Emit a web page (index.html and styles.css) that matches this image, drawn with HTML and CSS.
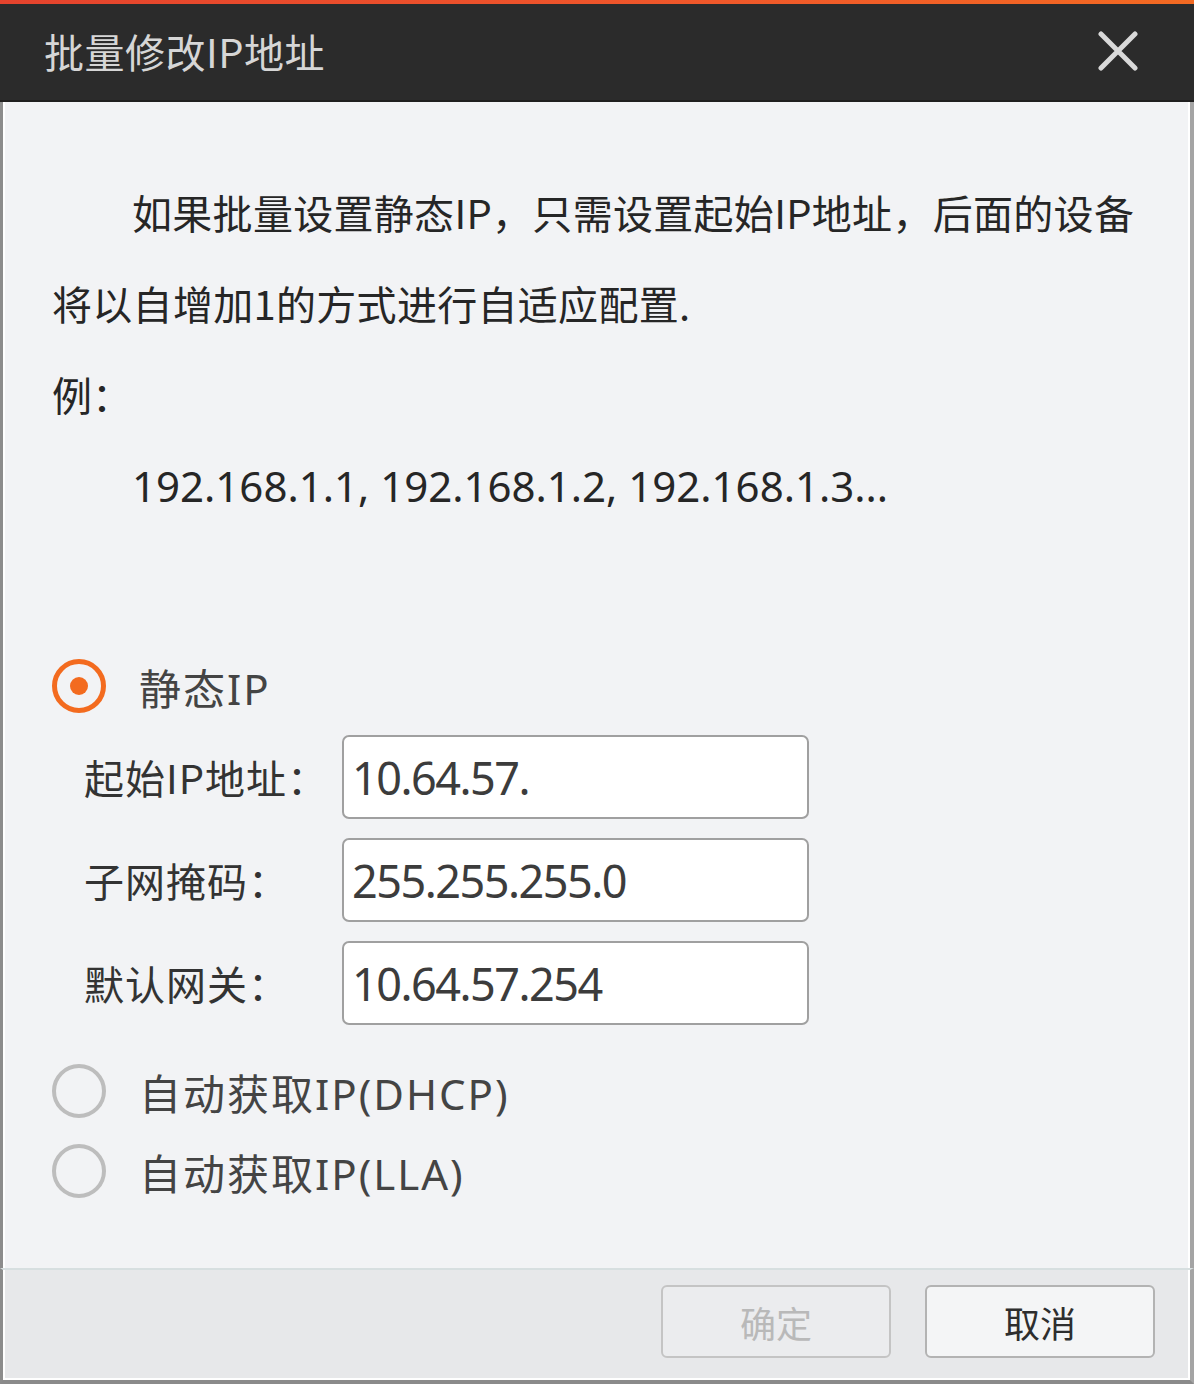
FILE: index.html
```html
<!DOCTYPE html>
<html lang="zh-CN">
<head>
<meta charset="utf-8">
<title>批量修改IP地址</title>
<link rel="stylesheet" href="styles.css">
</head>
<body>
<div class="dialog">
  <div class="accent"></div>
  <header class="titlebar">
    <span class="title">批量修改IP地址</span>
    <button class="close" aria-label="关闭">
      <svg width="40" height="40" viewBox="0 0 40 40"><path d="M3 3 L37 37 M37 3 L3 37" stroke="#d9d9d9" stroke-width="5" stroke-linecap="round" fill="none"/></svg>
    </button>
  </header>
  <main class="content">
    <p class="intro">如果批量设置静态IP，只需设置起始IP地址，后面的设备<br>将以自增加1的方式进行自适应配置.</p>
    <p class="line">例：</p>
    <p class="line example">192.168.1.1, 192.168.1.2, 192.168.1.3...</p>

    <div class="radio-row static">
      <span class="radio checked"></span>
      <span class="radio-label">静态IP</span>
    </div>
    <div class="form">
      <div class="field">
        <span class="field-label">起始IP地址：</span>
        <div class="input">10.64.57.</div>
      </div>
      <div class="field">
        <span class="field-label">子网掩码：</span>
        <div class="input">255.255.255.0</div>
      </div>
      <div class="field">
        <span class="field-label">默认网关：</span>
        <div class="input">10.64.57.254</div>
      </div>
    </div>
    <div class="radio-row dhcp">
      <span class="radio"></span>
      <span class="radio-label">自动获取IP(DHCP)</span>
    </div>
    <div class="radio-row">
      <span class="radio"></span>
      <span class="radio-label">自动获取IP(LLA)</span>
    </div>
  </main>
  <footer class="footer">
    <button class="btn disabled">确定</button>
    <button class="btn">取消</button>
  </footer>
</div>
</body>
</html>
```

FILE: styles.css
```css
html, body {
  margin: 0;
  padding: 0;
  background: #f2f3f5;
}
body {
  font-family: "Noto Sans", "Noto Sans CJK SC", sans-serif;
}
.dialog {
  width: 1194px;
  height: 1384px;
  display: flex;
  flex-direction: column;
  box-sizing: border-box;
}
.accent {
  height: 4px;
  background: linear-gradient(to right, #e5432d, #f0582a 60%, #f36a22);
}
.titlebar {
  height: 98px;
  background: #2b2b2b;
  border-bottom: 2px solid #1f1f1f;
  box-sizing: border-box;
  display: flex;
  align-items: center;
  justify-content: space-between;
  padding: 0 56px 2px 44px;
}
.title {
  font-family: "Noto Sans CJK SC", sans-serif;
  font-size: 40px;
  color: #d6d6d6;
  letter-spacing: 0.5px;
}
.close {
  border: 0;
  background: none;
  padding: 0;
  width: 40px;
  height: 40px;
  display: flex;
}
.content {
  flex: 1;
  background: #f2f3f5;
  border-left: 3px solid #8c8c8c;
  border-right: 4px solid #a4a4a4;
  box-shadow: inset 2px 0 0 #ffffff, inset -2px 0 0 #ffffff;
  padding: 65px 0 0 49px;
  display: flex;
  flex-direction: column;
  color: #262626;
}
.intro, .line {
  margin: 0;
  font-size: 40px;
  line-height: 91px;
  font-family: "Noto Sans CJK SC", sans-serif;
}
.intro {
  text-indent: 80px;
  white-space: nowrap;
  letter-spacing: 0.3px;
}
.example {
  padding-left: 80px;
  font-family: "Noto Sans", sans-serif;
  font-size: 42px;
}
.radio-row {
  display: flex;
  align-items: center;
  height: 60px;
  gap: 33px;
}
.radio-row.static {
  margin-top: 125px;
}
.radio-row.dhcp {
  margin-top: 36px;
  margin-bottom: 20px;
}
.radio {
  width: 54px;
  height: 54px;
  box-sizing: border-box;
  border-radius: 50%;
  border: 4px solid #bdbdbd;
  display: flex;
  align-items: center;
  justify-content: center;
}
.radio.checked {
  border: 5px solid #f36b1f;
}
.radio.checked::after {
  content: "";
  width: 18px;
  height: 18px;
  border-radius: 50%;
  background: #f36b1f;
}
.radio-label {
  font-size: 42px;
  color: #444;
  font-family: "Noto Sans", "Noto Sans CJK SC", sans-serif;
  letter-spacing: 2px;
}
.form {
  display: flex;
  flex-direction: column;
  gap: 19px;
  margin-top: 19px;
}
.field {
  display: flex;
  align-items: center;
}
.field-label {
  width: 290px;
  flex: none;
  white-space: nowrap;
  padding-left: 32px;
  box-sizing: border-box;
  font-size: 40px;
  color: #333;
  font-family: "Noto Sans CJK SC", sans-serif;
  letter-spacing: 1px;
}
.input {
  width: 467px;
  height: 84px;
  box-sizing: border-box;
  background: #fff;
  border: 2px solid #a0a0a0;
  border-radius: 7px;
  padding: 0 8px;
  display: flex;
  align-items: center;
  font-size: 45px;
  color: #3c3c3c;
  letter-spacing: -1.5px;
}
.footer {
  height: 116px;
  box-sizing: border-box;
  background: #e7e8ea;
  border-top: 2px solid #d7dfe0;
  border-left: 3px solid #8c8c8c;
  border-right: 4px solid #a4a4a4;
  border-bottom: 4px solid #8a8a8a;
  box-shadow: inset 2px 0 0 #ffffff, inset -2px 0 0 #ffffff, inset 0 -2px 0 #ffffff;
  display: flex;
  justify-content: flex-end;
  align-items: flex-start;
  gap: 34px;
  padding: 15px 35px 0 0;
}
.btn {
  width: 230px;
  height: 73px;
  box-sizing: border-box;
  border: 2px solid #b3b3b3;
  border-radius: 6px;
  background: #f4f5f6;
  font-family: "Noto Sans CJK SC", sans-serif;
  font-size: 36px;
  color: #2e2e2e;
  padding: 0;
}
.btn.disabled {
  background: #ebecee;
  border-color: #c4c4c4;
  color: #b9b9b9;
}
```
